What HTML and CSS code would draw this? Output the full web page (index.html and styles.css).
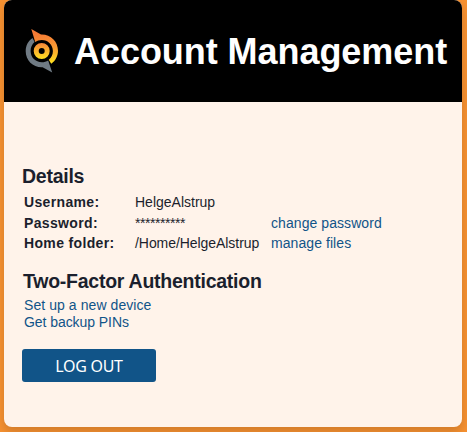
FILE: index.html
```html
<!DOCTYPE html>
<html lang="en">

<head>
    <meta charset="UTF-8">
    <meta name="viewport" content="width=device-width, initial-scale=1.0">
    <title>Account Management</title>
    <link rel="stylesheet" href="styles.css">
</head>

<body>
    <div class="card">
        <header class="card-header">
            <svg class="logo" width="34" height="44" viewBox="0 0 34 44">
                <defs>
                    <linearGradient id="flame" gradientUnits="userSpaceOnUse" x1="16" y1="4" x2="20" y2="36">
                        <stop offset="0" stop-color="#f57a35" />
                        <stop offset="0.5" stop-color="#f99a32" />
                        <stop offset="1" stop-color="#ffe51e" />
                    </linearGradient>
                    <linearGradient id="core" gradientUnits="userSpaceOnUse" x1="16" y1="14" x2="16" y2="30">
                        <stop offset="0" stop-color="#f6863a" />
                        <stop offset="1" stop-color="#ffdf20" />
                    </linearGradient>
                </defs>
                <path fill="url(#flame)" d="M6.3 0 L16 5.6 C25.5 5.2 33 12.5 33 21.8 C33 27 30.6 31.8 26.2 34.7 L23.8 30.8 C26.3 28.8 27.9 25.7 27.9 22 C27.9 15.6 22.9 10.9 16.8 10.9 C14.2 10.9 12 11.6 10.2 12.9 Z" />
                <path fill="#707b84" d="M27.2 43.6 L17.6 38.3 C8.2 38.8 .7 31.4 .7 22.2 C.7 16.8 3.2 12 7.5 9.1 L9.6 13 C7.1 15.1 5.6 18.4 5.6 22 C5.6 28.5 10.6 33.2 16.8 33.2 C19.2 33.2 21.3 32.6 23.2 31.4 Z" />
                <circle cx="16.7" cy="22" r="5.5" fill="none" stroke="url(#core)" stroke-width="5" />
            </svg>
            <h1>Account Management</h1>
        </header>
        <main>
            <h2>Details</h2>
            <table class="details">
                <tr>
                    <th>Username:</th>
                    <td>HelgeAlstrup</td>
                    <td></td>
                </tr>
                <tr>
                    <th>Password:</th>
                    <td class="mask">**********</td>
                    <td><a class="change-link" href="#">change password</a></td>
                </tr>
                <tr class="folder-row">
                    <th>Home folder:</th>
                    <td class="folder">/Home/HelgeAlstrup</td>
                    <td><a class="files-link" href="#">manage files</a></td>
                </tr>
            </table>
            <h2 class="auth-title">Two-Factor Authentication</h2>
            <ul class="auth-links">
                <li><a class="device-link" href="#">Set up a new device</a></li>
                <li><a class="pin-link" href="#">Get backup PINs</a></li>
            </ul>
            <button type="button" class="logout-btn">LOG OUT</button>
        </main>
    </div>
</body>

</html>
```

FILE: styles.css
```css
body {
    margin: 0;
    height: 432px;
    overflow: hidden;
    background-color: #f69131;
    font-family: "Liberation Sans", Arial, sans-serif;
    font-size: 14px;
    color: #1b1f2d;
}

.card {
    width: 458px;
    height: 427px;
    margin-left: 4px;
    background-color: #fff3ea;
    border-radius: 8px;
    box-shadow: 0 5px 10px rgba(0, 0, 0, 0.15);
    overflow: hidden;
}

.card-header {
    display: flex;
    align-items: center;
    height: 102px;
    box-sizing: border-box;
    padding-left: 21px;
    background-color: #000;
}

.logo {
    margin-right: 15px;
}

h1 {
    margin: 2px 0 0;
    font-size: 36px;
    line-height: 42px;
    letter-spacing: -0.05px;
    color: #fff;
    white-space: nowrap;
}

main {
    padding: 63px 18px 0;
}

h2 {
    margin: 0;
    font-size: 19.5px;
    line-height: 22px;
    letter-spacing: -0.25px;
}

.details {
    margin: 5px 0 0 2px;
    border-collapse: collapse;
    table-layout: fixed;
    width: 400px;
}

.details th,
.details td {
    height: 21px;
    padding: 0;
    text-align: left;
    line-height: 21px;
    white-space: nowrap;
}

.details .folder-row th,
.details .folder-row td {
    height: 19px;
    line-height: 19px;
}

.details th {
    width: 111px;
    letter-spacing: 0.35px;
}

.details td:nth-child(2) {
    width: 136px;
}

.details .mask {
    letter-spacing: -0.45px;
}

.details .folder {
    letter-spacing: -0.06px;
}

a {
    color: #115488;
    text-decoration: none;
}

.change-link,
.files-link,
.device-link {
    letter-spacing: 0.07px;
}

.pin-link {
    letter-spacing: -0.06px;
}

.auth-title {
    margin: 17px 0 0 1px;
}

.auth-links {
    list-style: none;
    margin: 5px 0 0 2px;
    padding: 0;
    line-height: 17px;
}

.logout-btn {
    display: block;
    width: 134px;
    height: 33px;
    margin-top: 18px;
    padding: 0;
    border: none;
    border-radius: 3px;
    background-color: #115488;
    color: #fff;
    font-family: "Noto Sans", "Open Sans", sans-serif;
    font-size: 16px;
    letter-spacing: -0.3px;
    cursor: pointer;
}
```
